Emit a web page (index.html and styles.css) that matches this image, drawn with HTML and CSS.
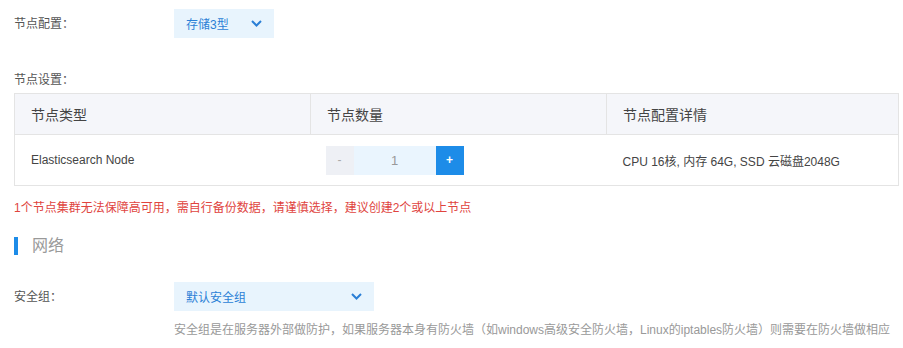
FILE: index.html
```html
<!DOCTYPE html>
<html lang="zh-CN">
<head>
    <meta charset="UTF-8">
    <meta name="viewport" content="width=device-width, initial-scale=1.0">
    <title>节点配置</title>
    <link rel="stylesheet" href="styles.css">
</head>
<body>
    <div class="page">
        <div class="form-row first">
            <div class="label">节点配置：</div>
            <div class="select small">
                <span>存储3型</span>
                <svg class="chevron" width="11" height="7" viewBox="0 0 11 7"><path d="M1 1l4.5 4.5L10 1" fill="none" stroke="#2b7fd6" stroke-width="2"/></svg>
            </div>
        </div>

        <div class="label sub">节点设置：</div>
        <table class="nodes">
            <colgroup>
                <col class="col-type">
                <col class="col-count">
                <col>
            </colgroup>
            <thead>
                <tr>
                    <th>节点类型</th>
                    <th>节点数量</th>
                    <th>节点配置详情</th>
                </tr>
            </thead>
            <tbody>
                <tr>
                    <td>Elasticsearch Node</td>
                    <td>
                        <div class="stepper">
                            <button class="minus">-</button>
                            <span class="value">1</span>
                            <button class="plus">+</button>
                        </div>
                    </td>
                    <td>CPU 16核, 内存 64G, SSD 云磁盘2048G</td>
                </tr>
            </tbody>
        </table>

        <div class="warn">1个节点集群无法保障高可用，需自行备份数据，请谨慎选择，建议创建2个或以上节点</div>

        <h2 class="section">网络</h2>

        <div class="form-row">
            <div class="label">安全组：</div>
            <div class="select wide">
                <span>默认安全组</span>
                <svg class="chevron" width="11" height="7" viewBox="0 0 11 7"><path d="M1 1l4.5 4.5L10 1" fill="none" stroke="#2b7fd6" stroke-width="2"/></svg>
            </div>
        </div>
        <div class="help">安全组是在服务器外部做防护，如果服务器本身有防火墙（如windows高级安全防火墙，Linux的iptables防火墙）则需要在防火墙做相应</div>
    </div>
</body>
</html>
```

FILE: styles.css
```css
body {
    margin: 0;
    font-family: "Liberation Sans", Arial, "Noto Sans CJK SC", sans-serif;
    font-size: 12px;
    color: #444;
    background-color: #fff;
}
.page {
    padding: 0 5px 0 14px;
}
.form-row {
    display: flex;
    align-items: center;
    height: 29px;
}
.form-row.first {
    margin-top: 9px;
}
.label {
    width: 160px;
    line-height: 18px;
    color: #555;
}
.label.sub {
    margin-top: 33px;
}
.select {
    display: flex;
    align-items: center;
    justify-content: space-between;
    height: 29px;
    padding: 0 12px;
    box-sizing: border-box;
    background-color: #e8f4fd;
    color: #2b7fd6;
}
.select.small {
    width: 100px;
}
.select.wide {
    width: 200px;
}
.nodes {
    margin-top: 4px;
    width: 885px;
    border-collapse: collapse;
    table-layout: fixed;
}
.col-type,
.col-count {
    width: 296px;
}
.nodes th,
.nodes td {
    border: 1px solid #e4e4e4;
    padding: 0 16px;
    text-align: left;
}
.nodes th {
    height: 40px;
    font-size: 14px;
    font-weight: normal;
    color: #444;
    background-color: #f5f6fa;
}
.nodes td {
    height: 50px;
    color: #444;
}
.nodes tbody td {
    border-left: none;
    border-right: none;
}
.nodes tbody td:first-child {
    border-left: 1px solid #e4e4e4;
}
.nodes tbody td:last-child {
    border-right: 1px solid #e4e4e4;
}
.stepper {
    display: flex;
    height: 29px;
    margin-left: -1px;
}
.stepper button {
    width: 28px;
    height: 29px;
    border: none;
    padding: 0;
    font-family: inherit;
    font-size: 12px;
}
.stepper .minus {
    background-color: #eef0f5;
    color: #aaa;
}
.stepper .plus {
    background-color: #1d8ce8;
    color: #fff;
    font-weight: bold;
}
.stepper .value {
    width: 82px;
    line-height: 29px;
    text-align: center;
    background-color: #eaf5fe;
    color: #999;
    font-size: 13px;
}
.warn {
    margin-top: 13px;
    line-height: 18px;
    color: #e0443e;
}
.section {
    margin: 20px 0 27px;
    padding-left: 14px;
    border-left: 4px solid #1d8ce8;
    font-size: 16px;
    font-weight: normal;
    line-height: 18px;
    color: #999;
}
.help {
    margin-top: 10px;
    padding-left: 160px;
    line-height: 18px;
    color: #999;
}
```
